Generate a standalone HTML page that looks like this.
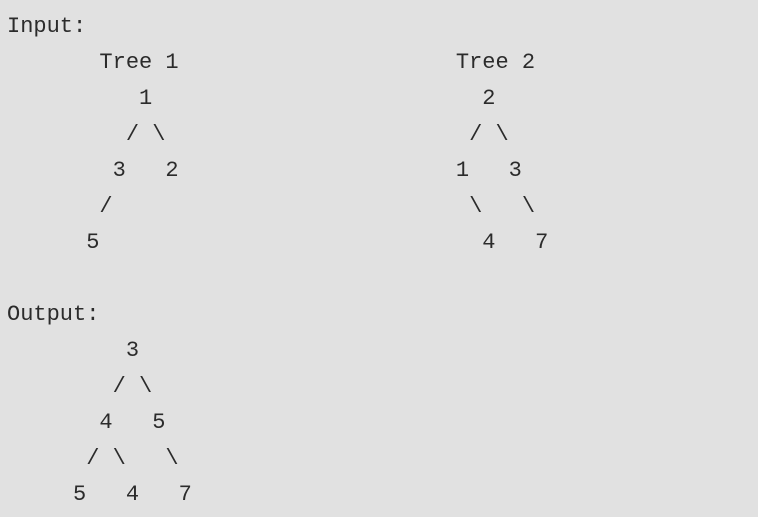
<!DOCTYPE html>
<html><head><meta charset="utf-8"><style>
html,body{margin:0;padding:0;background:#e1e1e1;width:758px;height:517px;overflow:hidden}
pre{margin:0;position:absolute;left:7px;top:9px;font-family:"Liberation Mono","DejaVu Sans Mono",monospace;font-size:22px;line-height:36px;color:#2b2b2b;letter-spacing:0}
</style></head><body><pre>Input:
       Tree 1                     Tree 2
          1                         2
         / \                       / \
        3   2                     1   3
       /                           \   \
      5                             4   7

Output:
         3
        / \
       4   5
      / \   \
     5   4   7</pre></body></html>
